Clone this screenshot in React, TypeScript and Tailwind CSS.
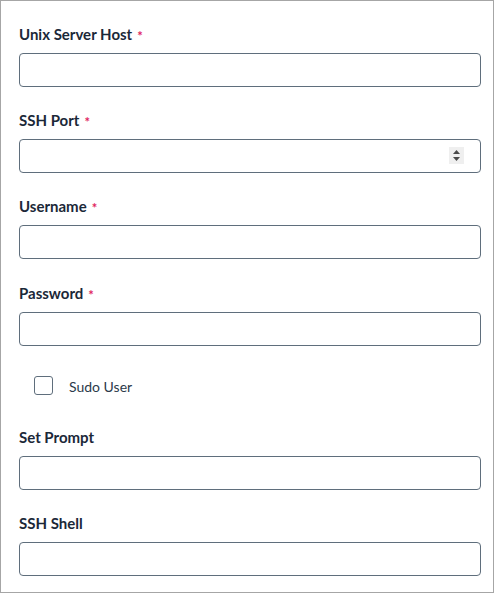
import React from "react";

const font = { fontFamily: "'Source Sans Pro', Lato, 'Noto Sans', sans-serif" };

function Label({ text, required }: { text: string; required?: boolean }) {
  return (
    <div className="h-[20px] flex items-center text-[15px] font-bold text-[#1b2838] leading-[20px] mb-[9px]">
      <span>{text}</span>
      {required && <span className="ml-[5px] mt-[3px] text-[#e0245e] text-[13px] font-bold">*</span>}
    </div>
  );
}

function Input({ spinner }: { spinner?: boolean }) {
  return (
    <div className="relative h-[34px] w-full rounded-[4px] border border-[#5f6e7c] bg-white">
      {spinner && (
        <div className="absolute right-[16px] top-[7px] w-[15px] h-[17px] bg-[#efefef] flex items-center justify-center">
          <svg width="9" height="13" viewBox="0 0 9 13">
            <path d="M4.5 1 L8 5 L1 5 Z" fill="#4a4a4a" />
            <path d="M1 8 L8 8 L4.5 12 Z" fill="#4a4a4a" />
          </svg>
        </div>
      )}
    </div>
  );
}

function Field({ label, required, spinner, mb }: { label: string; required?: boolean; spinner?: boolean; mb?: string }) {
  return (
    <div className={mb ?? "mb-[23px]"}>
      <Label text={label} required={required} />
      <Input spinner={spinner} />
    </div>
  );
}

export default function App() {
  return (
    <div style={font} className="w-[494px] h-[593px] border border-[#a6a6a6] bg-white pt-[23px] pl-[18px] pr-[12px] box-border">
      <Field label="Unix Server Host" required />
      <Field label="SSH Port" required spinner />
      <Field label="Username" required mb="mb-[24px]" />
      <Field label="Password" required mb="mb-0" />
      <div className="flex items-center h-[19px] mt-[30px] mb-[32px] pl-[15px]">
        <div className="w-[19px] h-[19px] rounded-[3px] border border-[#5f6e7c] bg-white" />
        <span className="ml-[16px] mt-[2px] text-[14px] text-[#2b3a4a]">Sudo User</span>
      </div>
      <Field label="Set Prompt" />
      <Field label="SSH Shell" mb="mb-0" />
    </div>
  );
}
